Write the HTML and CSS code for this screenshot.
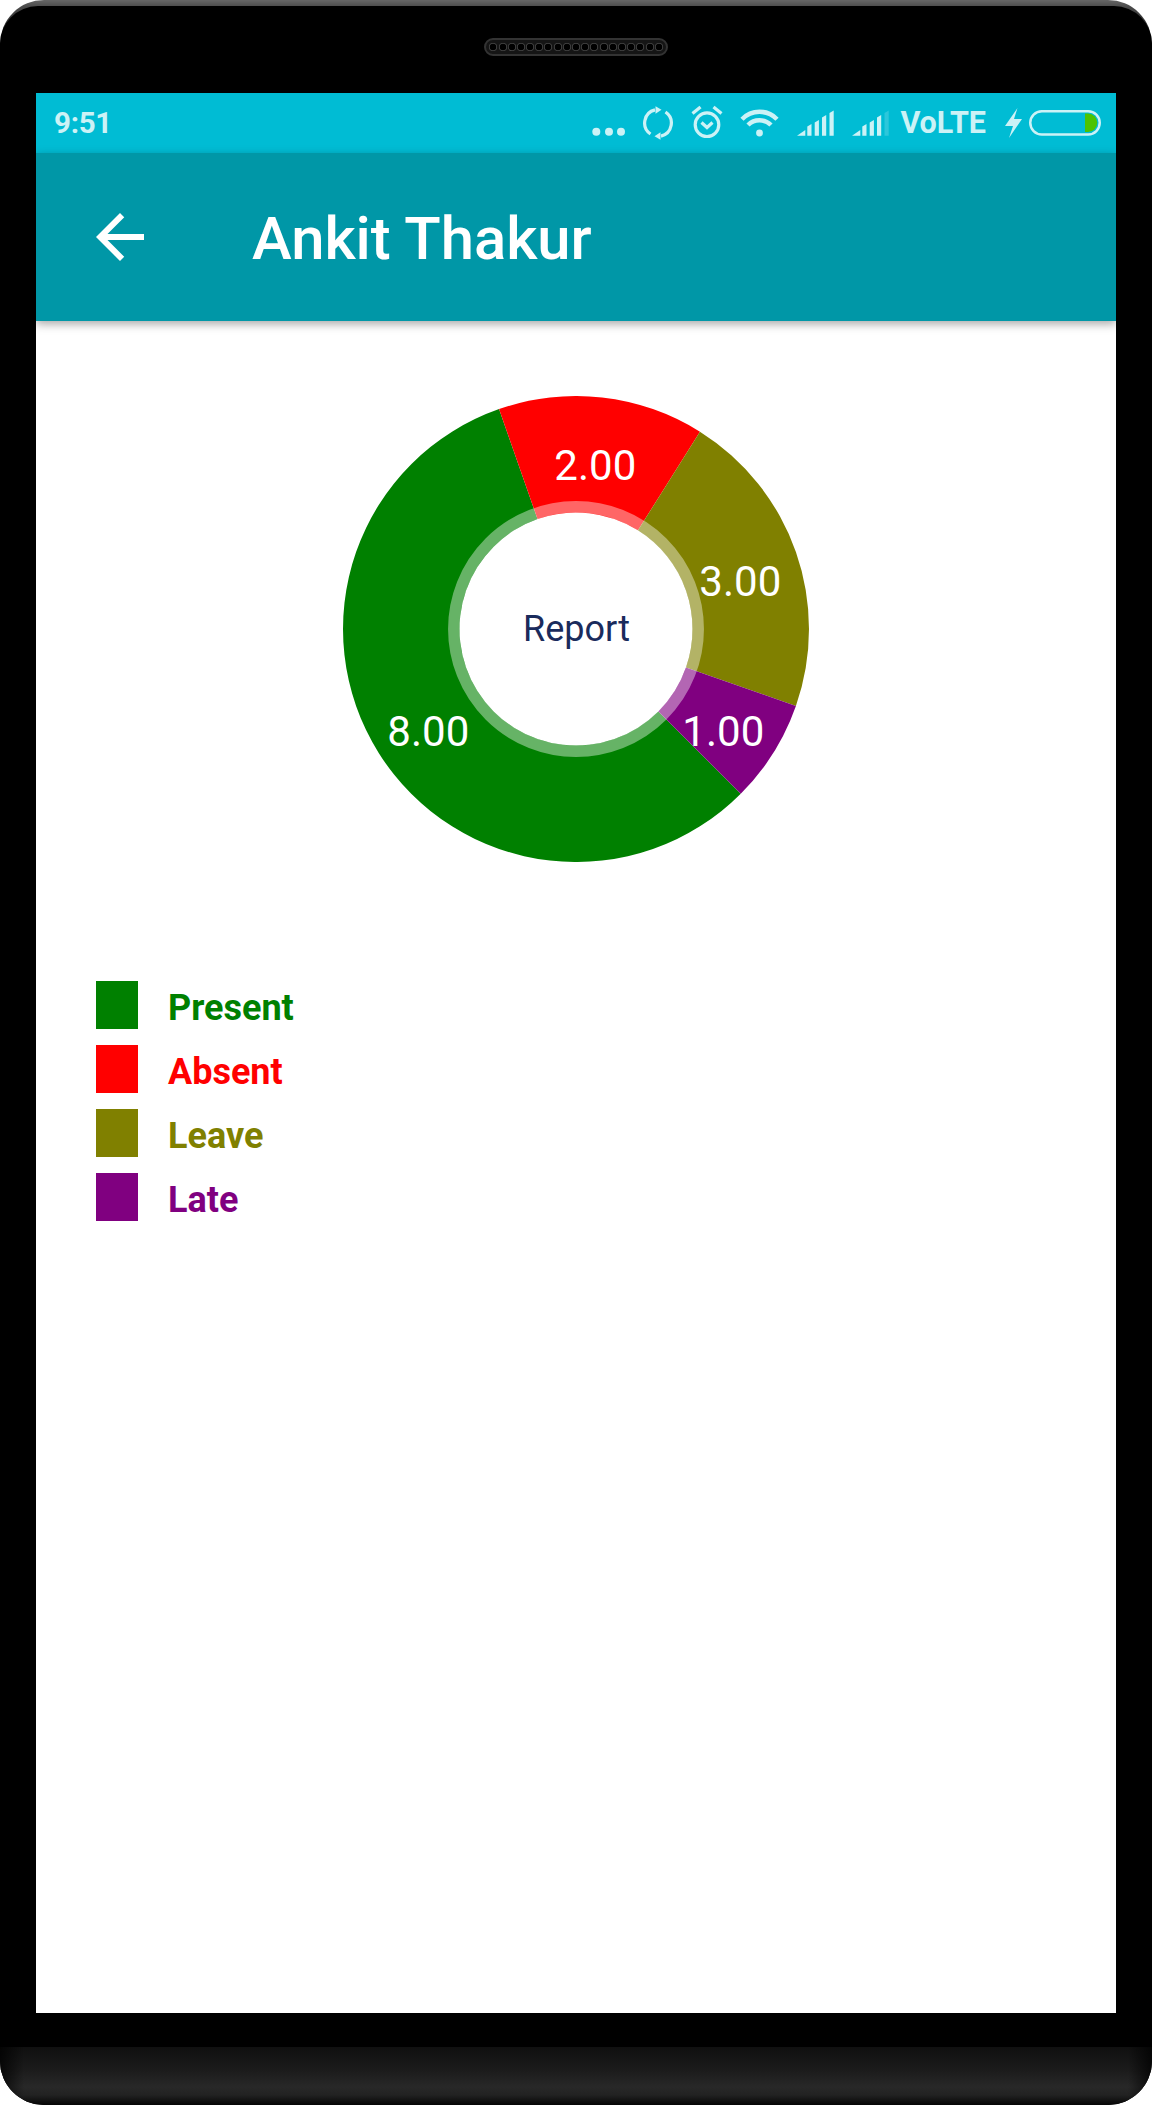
FILE: index.html
```html
<!DOCTYPE html>
<html lang="en">
<head>
<meta charset="utf-8">
<title>Ankit Thakur</title>
<link rel="stylesheet" href="styles.css">
</head>
<body>
<div class="phone">
  <div class="bezel">
    <div class="speaker">
      <i></i><i></i><i></i><i></i><i></i><i></i><i></i><i></i><i></i><i></i><i></i><i></i><i></i><i></i><i></i><i></i><i></i><i></i><i></i>
    </div>
  </div>
  <main class="screen">
    <div class="status">
      <span class="time">9:51</span>
      <div class="status-icons">
        <svg class="ic ic-dots" viewBox="0 0 35 40"><circle cx="5.3" cy="28.7" r="4"/><circle cx="18" cy="28.7" r="4"/><circle cx="30" cy="28.7" r="4"/></svg>
        <svg class="ic ic-sync" viewBox="0 0 30 40"><path class="ln" d="M12 6.900A13.400 13.400 0 0 0 7.500 31"/><path class="ln" d="M18 33.100A13.400 13.400 0 0 0 22.500 9"/><path d="M12.500 3.200 18.500 6.800 12.500 10.800z"/><path d="M17.500 36.800 11.500 33.200 17.500 29.200z"/></svg>
        <svg class="ic ic-alarm" viewBox="0 0 32 40"><circle class="ln" cx="16" cy="21.700" r="11.800"/><path class="ln" d="M10.500 19.500l5.500 5 5.500-5"/><path class="ln" d="M1.500 10.500 9.500 4"/><path class="ln" d="M30.500 10.500 22.500 4"/></svg>
        <svg class="ic ic-wifi" viewBox="0 0 39 40"><circle cx="19.5" cy="30" r="3.4"/><path class="ln arc" d="M2 16.200a24.300 24.300 0 0 1 35 0"/><path class="ln arc" d="M8 22a16.300 16.300 0 0 1 23 0"/></svg>
        <svg class="ic ic-signal" viewBox="0 0 37 40"><path d="M0 32.700 8.300 27v5.700zM10.300 23.500l4.200-2.500v11.700h-4.200zM17.700 19.500l4.200-2.500v15.700h-4.200zM25 14.500l4.200-2.500v20.700H25zM32.500 10l4.200-2.500v25.200h-4.200z"/></svg>
        <svg class="ic ic-signal" viewBox="0 0 37 40"><path d="M0 32.700 8.300 27v5.700zM10.300 23.500l4.200-2.500v11.700h-4.200zM17.700 19.500l4.200-2.500v15.700h-4.200zM25 14.500l4.200-2.500v20.700H25z"/><path class="dim" d="M32.500 10l4.200-2.500v25.200h-4.200z"/></svg>
        <span class="volte">VoLTE</span>
        <svg class="ic ic-bolt" viewBox="0 0 17 40"><path d="M12.500 5 0 23h8L4 35 17 16H9z"/></svg>
        <svg class="ic ic-battery" viewBox="0 0 72 40"><rect class="ln thin" x="1.250" y="8.250" width="69.500" height="23.200" rx="11.600"/><path class="charge" d="M56 10.500h3a9.250 9.250 0 0 1 0 18.500h-3z"/></svg>
      </div>
    </div>
    <header class="toolbar">
      <svg class="back" viewBox="0 0 24 24"><path d="M20 11H7.830l5.590-5.590L12 4l-8 8 8 8 1.410-1.410L7.830 13H20v-2z"/></svg>
      <h1 class="title">Ankit Thakur</h1>
    </header>
    <svg class="donut" viewBox="-233 -233 466 466">
      <path class="s-present" d="M164.760 164.760A233 233 0 1 1-76.950-219.920L-38.480-109.960A116.500 116.500 0 1 0 82.380 82.380Z"/>
      <path class="s-absent" d="M-76.950-219.920A233 233 0 0 1 123.960-197.290L61.980-98.640A116.500 116.500 0 0 0-38.480-109.960Z"/>
      <path class="s-leave" d="M123.960-197.290A233 233 0 0 1 219.920 76.950L109.960 38.480A116.500 116.500 0 0 0 61.980-98.640Z"/>
      <path class="s-late" d="M219.920 76.950A233 233 0 0 1 164.760 164.760L82.380 82.380A116.500 116.500 0 0 0 109.960 38.480Z"/>
      <circle class="ring" r="122.200"/>
      <text class="val" x="19.300" y="-149.400">2.00</text>
      <text class="val" x="164.300" y="-33.400">3.00</text>
      <text class="val" x="147.300" y="117">1.00</text>
      <text class="val" x="-147.700" y="117">8.00</text>
      <text class="center" x="0.500" y="12">Report</text>
    </svg>
    <ul class="legend">
      <li class="row c-present"><span class="swatch"></span><span class="label">Present</span></li>
      <li class="row c-absent"><span class="swatch"></span><span class="label">Absent</span></li>
      <li class="row c-leave"><span class="swatch"></span><span class="label">Leave</span></li>
      <li class="row c-late"><span class="swatch"></span><span class="label">Late</span></li>
    </ul>
  </main>
  <div class="chin"></div>
</div>
</body>
</html>
```
FILE: styles.css
```css
html, body {
  margin: 0;
  padding: 0;
  background: #fff;
}
.phone {
  width: 1152px;
  height: 2105px;
  border-radius: 44px;
  overflow: hidden;
  background: linear-gradient(#666 0, #4a4a4a 7px, #222 30px, #000 50px);
  font-family: Roboto, "Liberation Sans", sans-serif;
  display: flex;
  flex-direction: column;
}
.bezel {
  margin-top: 6px;
  height: 87px;
  box-sizing: border-box;
  padding-top: 32px;
  background: #000;
  border-radius: 38px 38px 0 0;
  display: flex;
  justify-content: center;
  align-items: flex-start;
}
.speaker {
  width: 184px;
  height: 18px;
  box-sizing: border-box;
  border-radius: 9px;
  background: #151515;
  border: 2px solid #333;
  display: flex;
  align-items: center;
  justify-content: center;
  gap: 1.2px;
}
.speaker i {
  width: 8px;
  height: 8px;
  flex: none;
  border-radius: 50%;
  background: #000;
  box-shadow: 0 0 0 1px #4a4a4a;
  transform: scale(.82);
}
.screen {
  margin: 0 36px;
  height: 1920px;
  flex: none;
  background: #fff;
  overflow: hidden;
}
.chin {
  margin-top: 34px;
  flex: 1;
  background:
    linear-gradient(90deg, rgba(0,0,0,.75) 0, rgba(0,0,0,0) 24px, rgba(0,0,0,0) 1128px, rgba(0,0,0,.75) 1152px),
    linear-gradient(#101010 0, #1c1c1c 24px, #282828 40px, #222 48px, #050505 58px);
}
.status {
  height: 60px;
  background: #00bcd4;
  display: flex;
  align-items: center;
  padding: 0 15px 0 18px;
  color: #ccf2f6;
}
.time {
  font-size: 29.5px;
  font-weight: 700;
  letter-spacing: -.3px;
}
.status-icons {
  margin-left: auto;
  display: flex;
  align-items: center;
}
.ic {
  height: 40px;
  flex: none;
  fill: #ccf2f6;
}
.ln {
  fill: none;
  stroke: #ccf2f6;
  stroke-width: 3.2;
}
.arc { stroke-width: 4.5; }
.thin { stroke-width: 2.5; }
.dim { opacity: .22; }
.charge { fill: #4cc300; }
.ic-dots { width: 35px; margin-right: 17px; }
.ic-sync { width: 30px; margin-right: 18px; }
.ic-alarm { width: 32px; margin-right: 17px; }
.ic-wifi { width: 39px; margin-right: 18px; }
.ic-signal { width: 37px; margin-right: 18px; }
.ic-signal + .ic-signal { margin-right: 11px; }
.volte {
  font-size: 30.5px;
  font-weight: 700;
  line-height: 40px;
  margin-right: 19px;
}
.ic-bolt { width: 17px; margin-right: 7px; }
.ic-battery { width: 72px; }
.toolbar {
  height: 168px;
  background: #0097a7;
  box-shadow: 0 3px 9px rgba(0,0,0,.35);
  display: flex;
  align-items: center;
  padding-left: 48px;
  position: relative;
}
.back {
  width: 72px;
  height: 72px;
  flex: none;
  fill: #fff;
}
.title {
  margin: 3px 0 0 96px;
  color: #fff;
  font-size: 59.800px;
  font-weight: 500;
}
.donut {
  display: block;
  width: 466px;
  height: 466px;
  margin: 75px auto 0;
}
.s-present { fill: #008000; }
.s-absent { fill: #f00; }
.s-leave { fill: #808000; }
.s-late { fill: #800080; }
.ring {
  fill: none;
  stroke: #fff;
  stroke-opacity: .4;
  stroke-width: 11.5;
}
.val {
  fill: #fff;
  font-size: 42px;
  text-anchor: middle;
}
.center {
  fill: #1a2b5c;
  font-size: 36px;
  text-anchor: middle;
}
.legend {
  list-style: none;
  margin: 119px 0 0;
  padding: 0 0 0 60px;
  display: flex;
  flex-direction: column;
  gap: 16px;
}
.row {
  height: 48px;
  display: flex;
  align-items: center;
  gap: 30px;
  font-size: 36px;
  font-weight: 700;
}
.label { padding-top: 6px; }
.swatch {
  width: 42px;
  height: 48px;
  flex: none;
}
.c-present { color: #008000; }
.c-absent { color: #f00; }
.c-leave { color: #808000; }
.c-late { color: #800080; }
.c-present .swatch { background: #008000; }
.c-absent .swatch { background: #f00; }
.c-leave .swatch { background: #808000; }
.c-late .swatch { background: #800080; }
```
